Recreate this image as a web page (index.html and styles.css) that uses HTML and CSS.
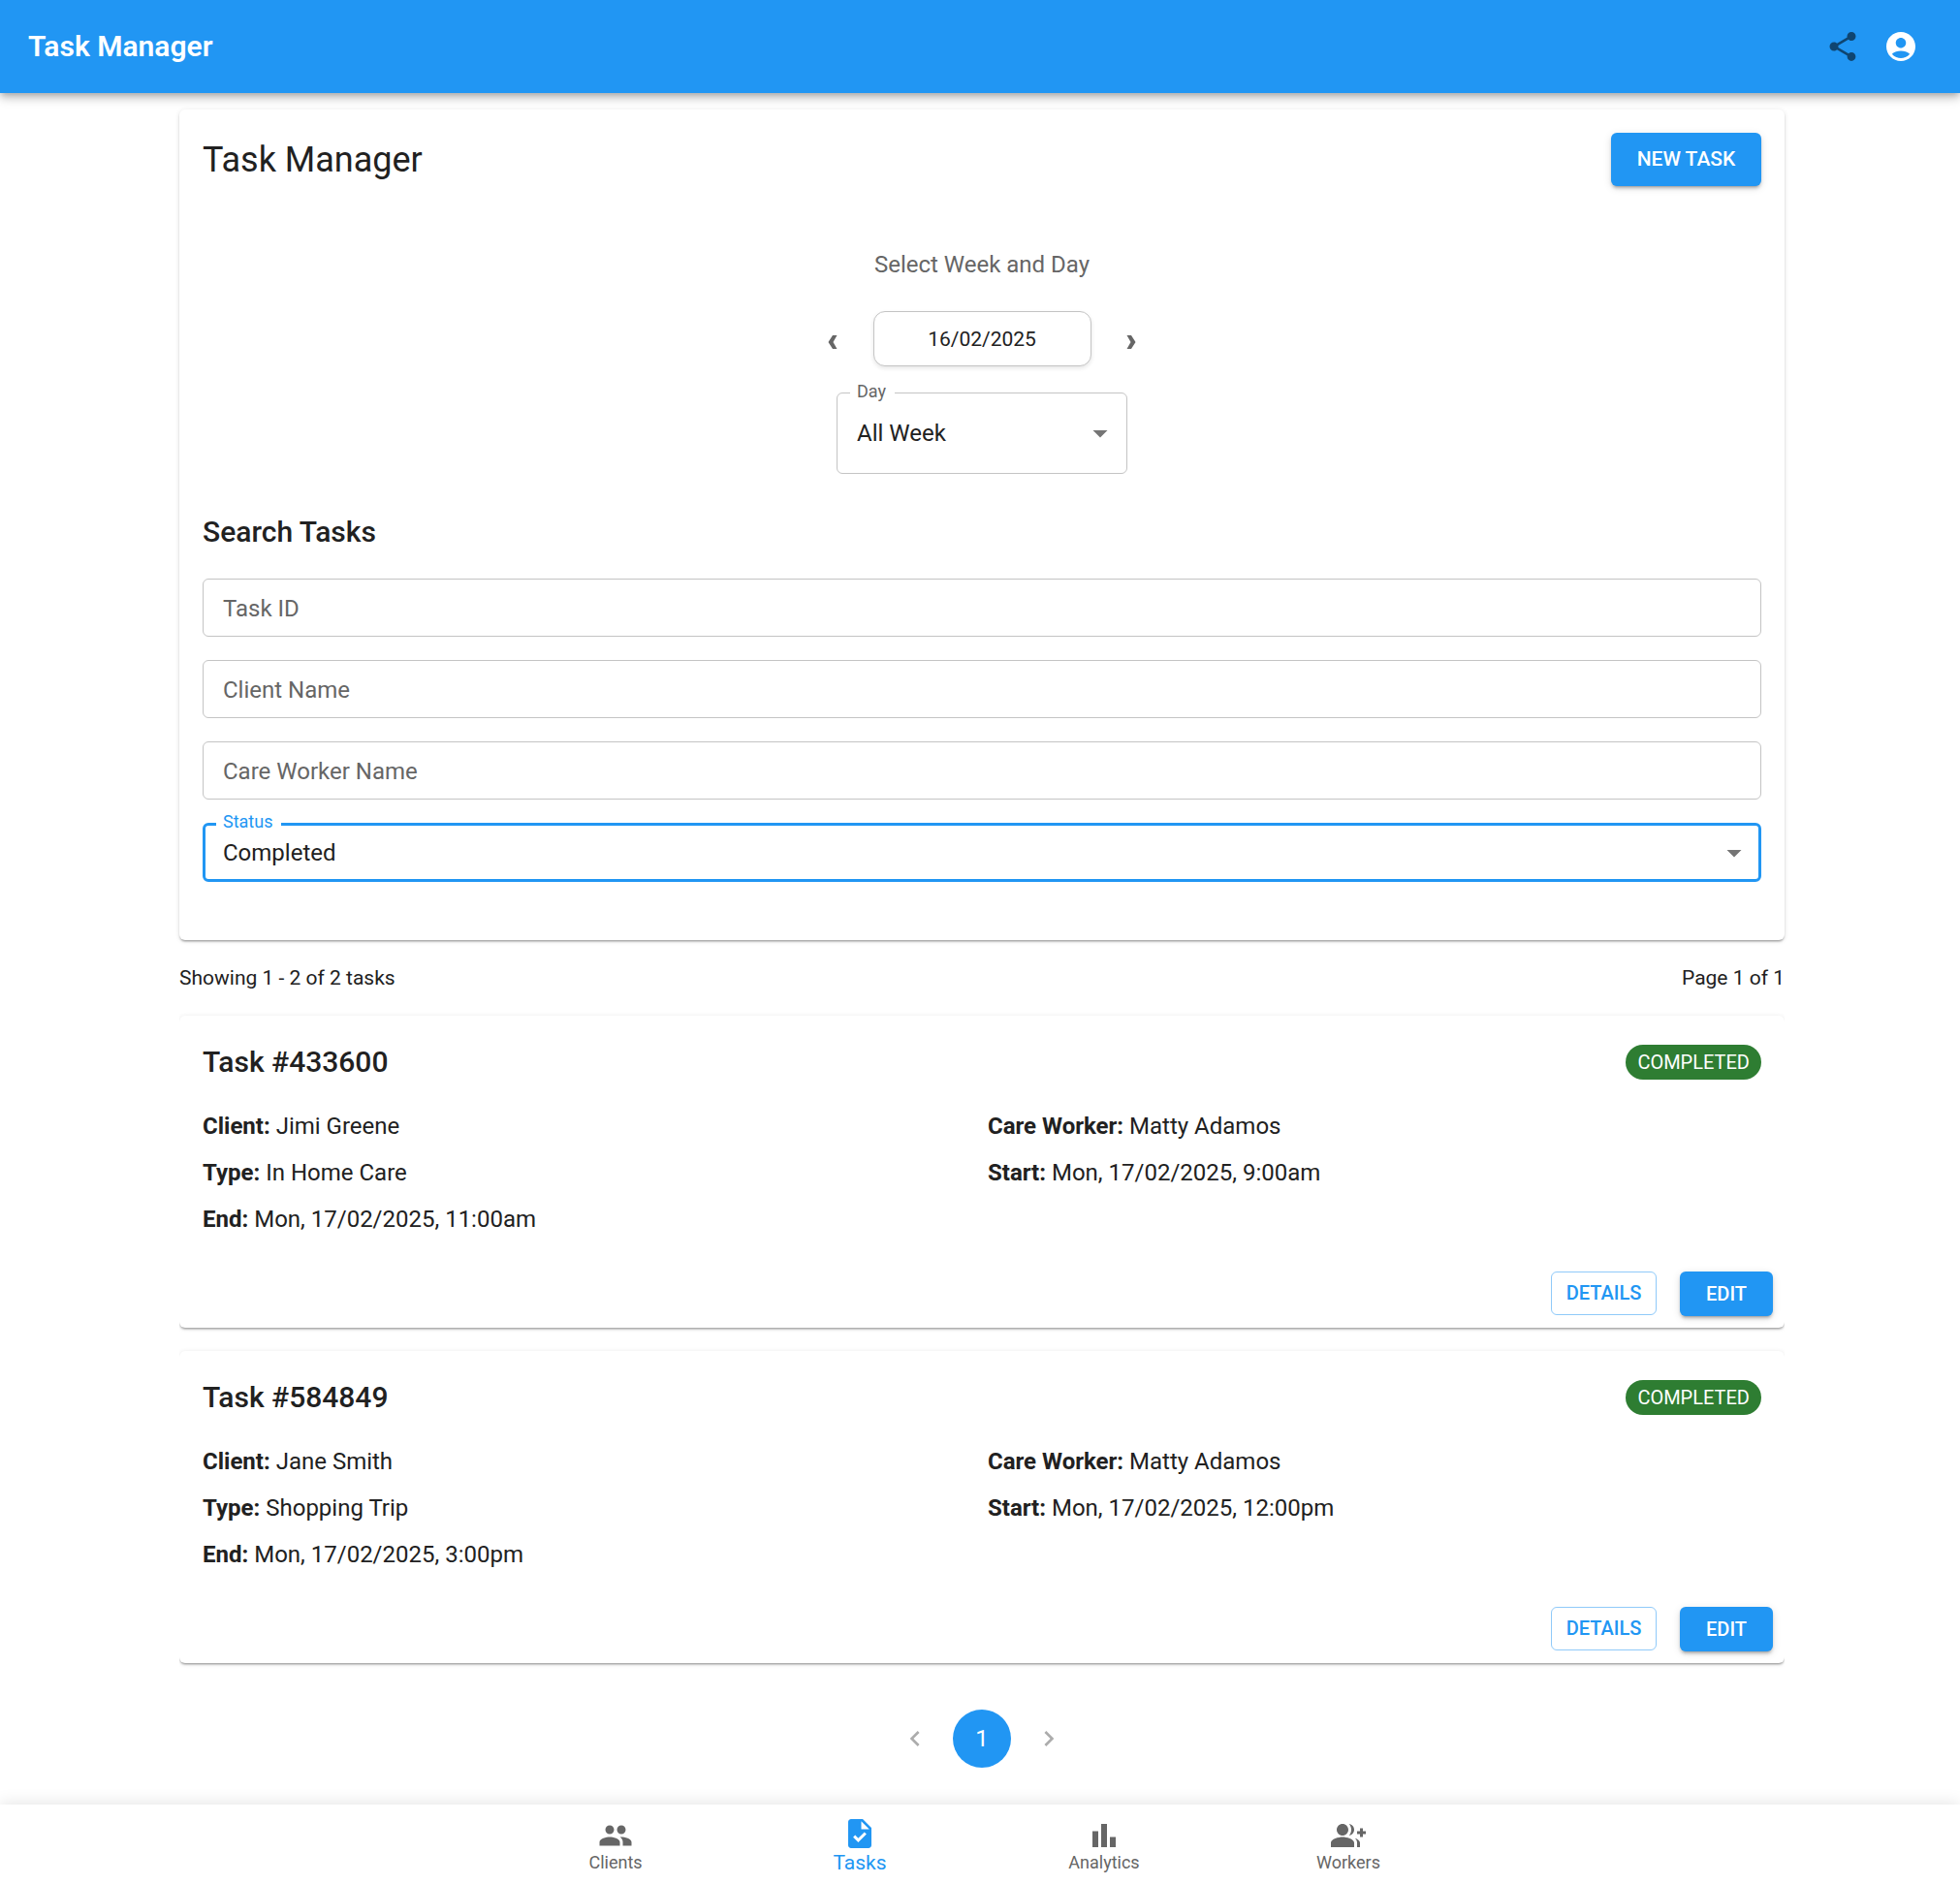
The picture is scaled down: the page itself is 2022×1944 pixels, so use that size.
FILE: index.html
```html
<!DOCTYPE html>
<html lang="en">
  <head>
    <meta charset="UTF-8" />
    <meta name="viewport" content="width=device-width, initial-scale=1.0" />
    <title>Task Manager</title>
    <link rel="stylesheet" href="styles.css">
  </head>
  <body>
    <!-- Top bar -->
    <header class="app-bar">
      <span class="app-title">Task Manager</span>
      <div class="app-actions">
        <button class="icon-btn share" type="button" aria-label="Share">
          <svg class="icon" viewBox="0 0 24 24"><path d="M18 16.08c-.76 0-1.44.3-1.96.77L8.91 12.7c.05-.23.09-.46.09-.7s-.04-.47-.09-.7l7.05-4.11c.54.5 1.25.81 2.04.81 1.66 0 3-1.34 3-3s-1.34-3-3-3-3 1.34-3 3c0 .24.04.47.09.7L8.04 9.81C7.5 9.31 6.79 9 6 9c-1.66 0-3 1.34-3 3s1.34 3 3 3c.79 0 1.5-.31 2.04-.81l7.12 4.16c-.05.21-.08.43-.08.65 0 1.61 1.31 2.92 2.92 2.92s2.92-1.31 2.92-2.92-1.31-2.92-2.92-2.92" /></svg>
        </button>
        <button class="icon-btn" type="button" aria-label="Account">
          <svg class="icon" viewBox="0 0 24 24"><path d="M12 2C6.48 2 2 6.48 2 12s4.48 10 10 10 10-4.48 10-10S17.52 2 12 2m0 4c1.93 0 3.5 1.57 3.5 3.5S13.93 13 12 13s-3.5-1.57-3.5-3.5S10.07 6 12 6m0 14c-2.03 0-4.43-.82-6.14-2.88C7.55 15.8 9.68 15 12 15s4.45.8 6.14 2.12C16.43 19.18 14.03 20 12 20" /></svg>
        </button>
      </div>
    </header>

    <main class="page">
      <!-- Filters -->
      <section class="card filters">
        <div class="filters-head">
          <h1>Task Manager</h1>
          <button class="btn btn-primary btn-large" type="button">New Task</button>
        </div>

        <p class="week-caption">Select Week and Day</p>
        <div class="week-picker">
          <button class="week-btn" type="button" aria-label="Previous week">
            <svg viewBox="0 0 36 57"><path d="M18 25h4.500l-4 7 4 7H18l-4.500-7z" /></svg>
          </button>
          <input class="week-date" type="text" value="16/02/2025" aria-label="Week" />
          <button class="week-btn" type="button" aria-label="Next week">
            <svg viewBox="0 0 36 57"><path d="M17 25h-4.500l4 7-4 7H17l4.500-7z" /></svg>
          </button>
        </div>
        <div class="field field-day">
          <select id="day">
            <option>All Week</option>
            <option>Monday</option>
            <option>Tuesday</option>
            <option>Wednesday</option>
            <option>Thursday</option>
            <option>Friday</option>
          </select>
          <label class="notch" for="day">Day</label>
          <svg class="arrow" viewBox="0 0 24 24"><path d="M7 10l5 5 5-5z" /></svg>
        </div>

        <h2>Search Tasks</h2>
        <form class="search">
          <div class="field">
            <input type="text" id="task-id" />
            <label class="inside" for="task-id">Task ID</label>
          </div>
          <div class="field">
            <input type="text" id="client-name" />
            <label class="inside" for="client-name">Client Name</label>
          </div>
          <div class="field">
            <input type="text" id="worker-name" />
            <label class="inside" for="worker-name">Care Worker Name</label>
          </div>
          <div class="field active">
            <select id="status">
              <option>Completed</option>
              <option>Assigned</option>
              <option>Cancelled</option>
            </select>
            <label class="notch" for="status">Status</label>
            <svg class="arrow" viewBox="0 0 24 24"><path d="M7 10l5 5 5-5z" /></svg>
          </div>
        </form>
      </section>

      <div class="results">
        <span>Showing 1 - 2 of 2 tasks</span>
        <span>Page 1 of 1</span>
      </div>

      <!-- Task list -->
      <div class="task-list">
        <article class="card task">
          <div class="task-head">
            <h2>Task #433600</h2>
            <span class="badge">Completed</span>
          </div>
          <div class="task-info">
            <p><strong>Client:</strong> Jimi Greene</p>
            <p><strong>Care Worker:</strong> Matty Adamos</p>
            <p><strong>Type:</strong> In Home Care</p>
            <p><strong>Start:</strong> Mon, 17/02/2025, 9:00am</p>
            <p><strong>End:</strong> Mon, 17/02/2025, 11:00am</p>
          </div>
          <div class="task-actions">
            <button class="btn btn-outline" type="button">Details</button>
            <button class="btn btn-primary" type="button">Edit</button>
          </div>
        </article>

        <article class="card task">
          <div class="task-head">
            <h2>Task #584849</h2>
            <span class="badge">Completed</span>
          </div>
          <div class="task-info">
            <p><strong>Client:</strong> Jane Smith</p>
            <p><strong>Care Worker:</strong> Matty Adamos</p>
            <p><strong>Type:</strong> Shopping Trip</p>
            <p><strong>Start:</strong> Mon, 17/02/2025, 12:00pm</p>
            <p><strong>End:</strong> Mon, 17/02/2025, 3:00pm</p>
          </div>
          <div class="task-actions">
            <button class="btn btn-outline" type="button">Details</button>
            <button class="btn btn-primary" type="button">Edit</button>
          </div>
        </article>
      </div>

      <nav class="pagination" aria-label="Pages">
        <button class="page-btn" type="button" aria-label="Previous page" disabled>
          <svg viewBox="0 0 24 24"><path d="M15.41 7.41 14 6l-6 6 6 6 1.41-1.41L10.83 12z" /></svg>
        </button>
        <button class="page-btn current" type="button">1</button>
        <button class="page-btn" type="button" aria-label="Next page" disabled>
          <svg viewBox="0 0 24 24"><path d="M10 6 8.59 7.41 13.17 12l-4.58 4.59L10 18l6-6z" /></svg>
        </button>
      </nav>
    </main>

    <!-- Bottom navigation -->
    <nav class="bottom-nav">
      <a href="#clients">
        <svg class="icon" viewBox="0 0 24 24"><path d="M16 11c1.66 0 2.99-1.34 2.99-3S17.66 5 16 5s-3 1.34-3 3 1.34 3 3 3m-8 0c1.66 0 2.99-1.34 2.99-3S9.66 5 8 5 5 6.34 5 8s1.34 3 3 3m0 2c-2.33 0-7 1.17-7 3.5V19h14v-2.5c0-2.33-4.67-3.5-7-3.5m8 0c-.29 0-.62.02-.97.05 1.16.84 1.97 1.97 1.97 3.45V19h6v-2.5c0-2.33-4.67-3.5-7-3.5" /></svg>
        <span>Clients</span>
      </a>
      <a href="#tasks" class="selected">
        <svg class="icon" viewBox="0 0 24 24"><path d="M14 2H6c-1.1 0-1.99.9-1.99 2L4 20c0 1.1.89 2 1.99 2H18c1.1 0 2-.9 2-2V8zm-3.06 16L7.4 14.46l1.41-1.41 2.12 2.12 4.24-4.24 1.41 1.41zM13 9V3.5L18.5 9z" /></svg>
        <span>Tasks</span>
      </a>
      <a href="#analytics">
        <svg class="icon" viewBox="0 0 24 24"><path d="M4 9h4v11H4zm12 4h4v7h-4zm-6-9h4v16h-4z" /></svg>
        <span>Analytics</span>
      </a>
      <a href="#workers">
        <svg class="icon" viewBox="0 0 24 24"><path d="M22 9V7h-2v2h-2v2h2v2h2v-2h2V9zM8 12c2.21 0 4-1.79 4-4s-1.79-4-4-4-4 1.79-4 4 1.79 4 4 4m0 1c-2.67 0-8 1.34-8 4v3h16v-3c0-2.66-5.33-4-8-4m4.51-8.95C13.43 5.11 14 6.49 14 8s-.57 2.89-1.49 3.95C14.47 11.7 16 10.04 16 8s-1.53-3.7-3.49-3.95m4.02 9.78C17.42 14.66 18 15.7 18 17v3h2v-3c0-1.45-1.59-2.51-3.47-3.17" /></svg>
        <span>Workers</span>
      </a>
    </nav>
  </body>
</html>
```

FILE: styles.css
```css
* {
  margin: 0;
  padding: 0;
  box-sizing: border-box;
}

body {
  min-height: 100vh;
  display: flex;
  flex-direction: column;
  background: #fff;
  color: #212121;
  font-family: Roboto, sans-serif;
  font-size: 24px;
  line-height: 36px;
}

button,
input,
select {
  font-family: inherit;
  color: inherit;
}

button {
  border: none;
  background: none;
  cursor: pointer;
}

svg {
  display: block;
  fill: currentColor;
}

.icon {
  width: 36px;
  height: 36px;
}

/* Top bar */
.app-bar {
  position: relative;
  z-index: 1;
  display: flex;
  align-items: center;
  justify-content: space-between;
  height: 96px;
  padding: 0 31px 0 29px;
  background: #2196f3;
  color: #fff;
  box-shadow: 0 3px 6px -2px rgba(0, 0, 0, 0.2),
    0 6px 8px 0 rgba(0, 0, 0, 0.14), 0 2px 15px 0 rgba(0, 0, 0, 0.12);
}

.app-title {
  font-size: 30px;
  font-weight: 600;
}

.app-actions {
  display: flex;
}

.icon-btn {
  padding: 12px;
}

.icon-btn.share {
  color: rgba(0, 0, 0, 0.54);
}

/* Layout */
.page {
  width: 100%;
  max-width: 1660px;
  margin: 0 auto;
  padding: 17px 0 36px 4px;
}

.card {
  background: #fff;
  border-radius: 6px;
  box-shadow: 0 3px 2px -2px rgba(0, 0, 0, 0.2),
    0 2px 2px 0 rgba(0, 0, 0, 0.14), 0 1px 5px 0 rgba(0, 0, 0, 0.12);
}

h1 {
  font-size: 36px;
  font-weight: 400;
  line-height: 48px;
}

h2 {
  font-size: 30px;
  font-weight: 500;
  line-height: 48px;
}

/* Buttons */
.btn {
  min-width: 96px;
  padding: 6px 14px;
  border-radius: 6px;
  font-size: 20px;
  font-weight: 500;
  line-height: 34px;
  text-transform: uppercase;
}

.btn-primary {
  background: #2196f3;
  color: #fff;
  box-shadow: 0 4px 2px -3px rgba(0, 0, 0, 0.2),
    0 3px 3px 0 rgba(0, 0, 0, 0.14), 0 2px 8px 0 rgba(0, 0, 0, 0.12);
}

.btn-outline {
  min-width: 109px;
  border: 1px solid rgba(33, 150, 243, 0.5);
  color: #2196f3;
  line-height: 31px;
}

.btn-large {
  min-width: 155px;
  padding: 9px 24px;
  font-size: 21px;
  line-height: 37px;
}

/* Filters */
.filters {
  padding: 24px 24px 60px;
}

.filters-head {
  display: flex;
  align-items: center;
  justify-content: space-between;
}

.week-caption {
  margin-top: 63px;
  text-align: center;
  color: #666;
}

.week-picker {
  display: flex;
  justify-content: center;
  gap: 24px;
  margin: 30px 0 27px;
}

.week-btn {
  width: 36px;
  color: #666;
}

.week-date {
  width: 225px;
  height: 57px;
  border: 1px solid #c4c4c4;
  border-radius: 12px;
  font-size: 21px;
  text-align: center;
  box-shadow: 0 2px 4px rgba(0, 0, 0, 0.1);
}

.field {
  position: relative;
}

.field input,
.field select {
  display: block;
  width: 100%;
  height: 60px;
  padding: 0 20px;
  border: 1px solid #c4c4c4;
  border-radius: 6px;
  background: #fff;
  font-size: 24px;
  appearance: none;
}

.field-day {
  width: 300px;
  margin: 0 auto 36px;
}

.field-day select {
  height: 84px;
}

.field.active select {
  height: 61px;
  padding: 0 18px;
  border: 3px solid #2196f3;
}

.inside {
  position: absolute;
  top: 13px;
  left: 21px;
  color: #666;
  pointer-events: none;
}

.notch {
  position: absolute;
  top: -13px;
  left: 14px;
  padding: 0 9px 0 7px;
  background: #fff;
  color: #666;
  font-size: 18px;
  line-height: 24px;
}

.active .notch {
  color: #2196f3;
}

.arrow {
  position: absolute;
  top: calc(50% - 18px);
  right: 10px;
  width: 36px;
  height: 36px;
  color: #757575;
  pointer-events: none;
}

.search {
  display: grid;
  gap: 24px;
  margin-top: 24px;
}

.results {
  display: flex;
  justify-content: space-between;
  margin: 24px 0;
  font-size: 21px;
  line-height: 30px;
}

/* Task list, the cards' side shadows are cut off */
.task-list {
  display: grid;
  gap: 24px;
  overflow-x: clip;
}

.task {
  padding: 24px 24px 12px;
}

.task-head {
  display: flex;
  align-items: center;
  justify-content: space-between;
}

.badge {
  padding: 0 12px;
  border-radius: 18px;
  background: #2e7d32;
  color: #fff;
  font-size: 20px;
  line-height: 36px;
  text-transform: uppercase;
}

.task-info {
  display: grid;
  grid-template-columns: 1fr 1fr;
  gap: 12px;
  margin: 24px 0 36px;
}

.task-info strong {
  font-weight: 700;
}

.task-actions {
  display: flex;
  align-items: flex-start;
  justify-content: flex-end;
  gap: 24px;
  margin-right: -12px;
}

/* Pagination */
.pagination {
  display: flex;
  justify-content: center;
  gap: 9px;
  margin-top: 48px;
}

.page-btn {
  display: flex;
  align-items: center;
  justify-content: center;
  width: 60px;
  height: 60px;
  border-radius: 50%;
  font-size: 24px;
}

.page-btn:disabled {
  color: #acacac;
}

.page-btn.current {
  background: #2196f3;
  color: #fff;
}

.page-btn svg {
  width: 32px;
  height: 32px;
}

/* Bottom navigation */
.bottom-nav {
  position: sticky;
  bottom: 0;
  display: flex;
  justify-content: center;
  height: 82px;
  margin-top: auto;
  padding: 2px 0 0 4px;
  background: #fff;
  box-shadow: 0 -2px 15px rgba(0, 0, 0, 0.1);
}

.bottom-nav a {
  display: flex;
  flex: 1;
  flex-direction: column;
  align-items: center;
  justify-content: center;
  max-width: 252px;
  color: #666;
  font-size: 18px;
  line-height: 20px;
  text-decoration: none;
}

.bottom-nav a.selected {
  color: #2196f3;
  font-size: 21px;
  line-height: 24px;
}
```
